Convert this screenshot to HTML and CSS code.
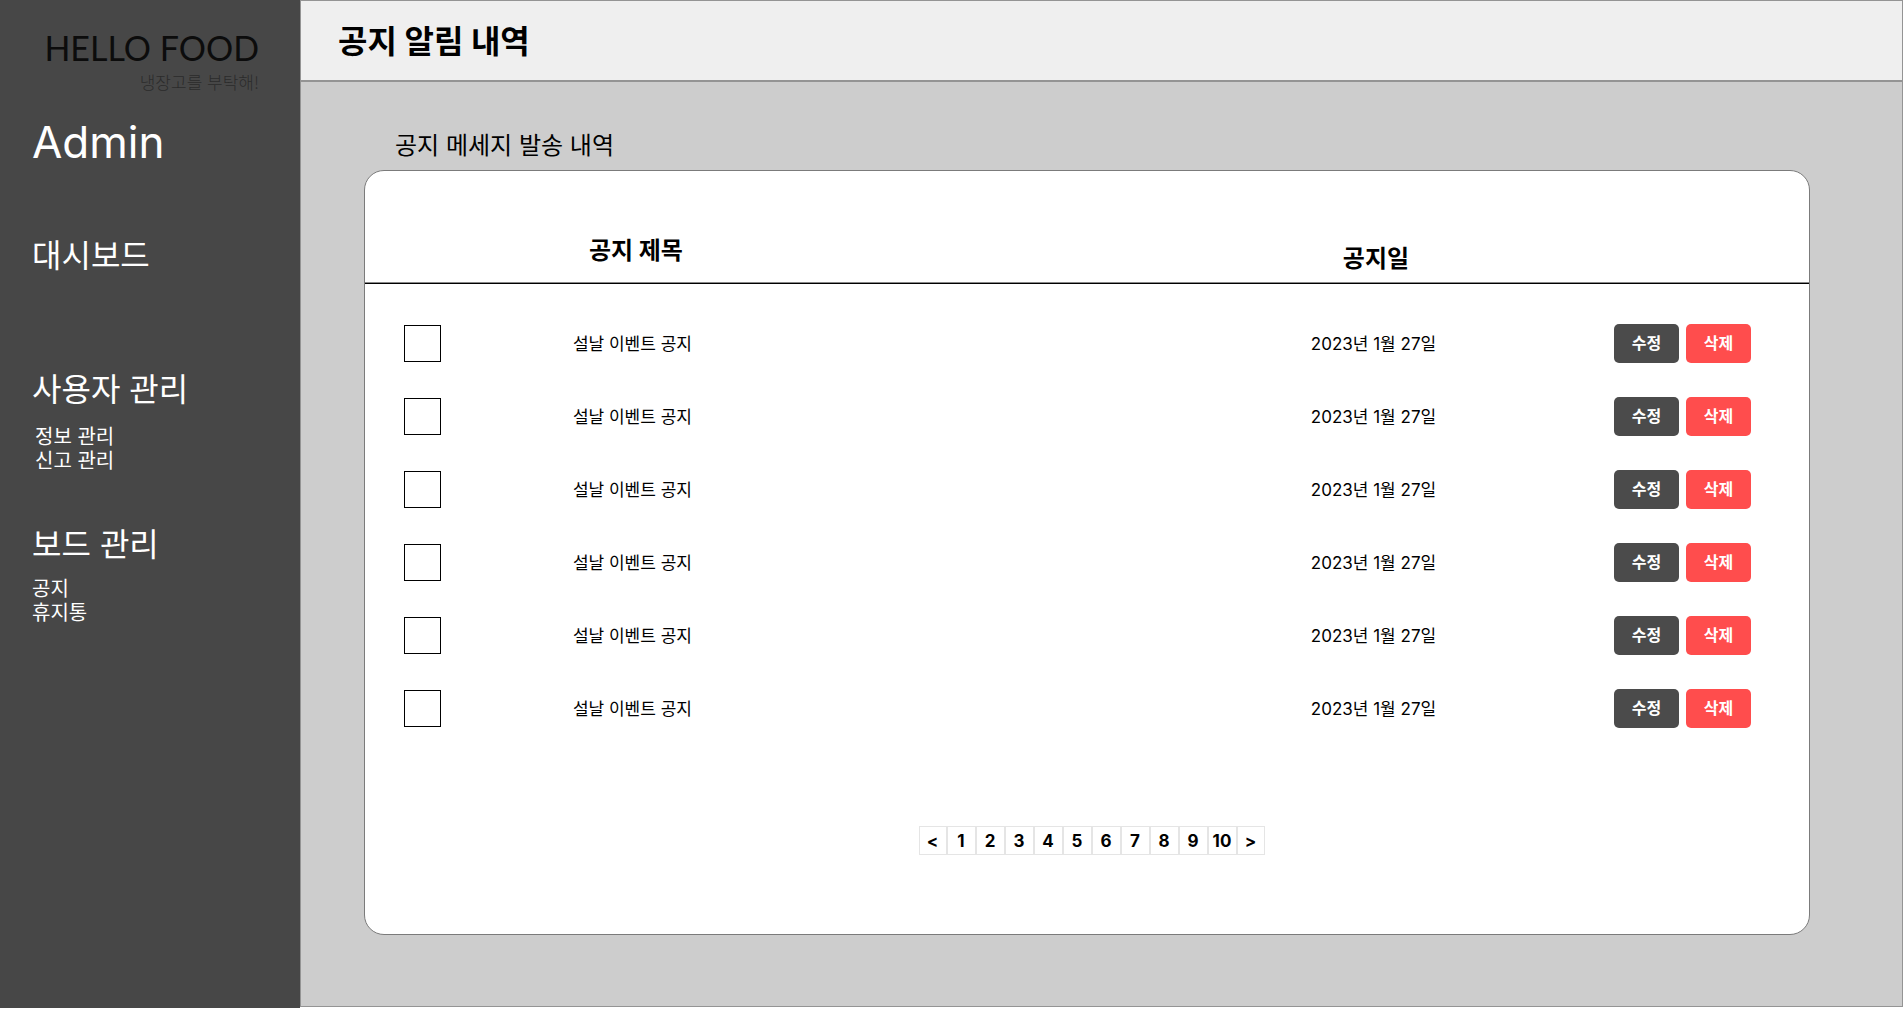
FILE: index.html
```html
<!DOCTYPE html>
<html lang="ko">
<head>
<meta charset="utf-8">
<meta name="viewport" content="width=device-width, initial-scale=1">
<title>공지 알림 내역</title>
<link rel="stylesheet" href="styles.css">
</head>
<body>
<div class="layout">
  <aside class="sidebar">
    <a class="logo" href="#">
      <span class="logo-name">HELLO FOOD</span>
      <span class="logo-tagline">냉장고를 부탁해!</span>
    </a>
    <p class="role">Admin</p>
    <nav class="menu">
      <section class="menu-group menu-group-first">
        <a class="menu-title" href="#">대시보드</a>
      </section>
      <section class="menu-group">
        <a class="menu-title" href="#">사용자 관리</a>
        <ul class="submenu submenu-indent">
          <li><a href="#">정보 관리</a></li>
          <li><a href="#">신고 관리</a></li>
        </ul>
      </section>
      <section class="menu-group">
        <a class="menu-title" href="#">보드 관리</a>
        <ul class="submenu">
          <li><a href="#">공지</a></li>
          <li><a href="#">휴지통</a></li>
        </ul>
      </section>
    </nav>
  </aside>
  <main class="main">
    <header class="topbar"><h1>공지 알림 내역</h1></header>
    <div class="content">
      <h2 class="section-title">공지 메세지 발송 내역</h2>
      <section class="card">
        <table class="notices">
          <colgroup><col class="col-check"><col class="col-title"><col class="col-date"><col></colgroup>
          <thead>
            <tr><th></th><th class="head-title">공지 제목</th><th class="head-date">공지일</th><th></th></tr>
          </thead>
          <tbody>
            <tr><td class="check"><input type="checkbox" aria-label="공지 1 선택"></td><td>설날 이벤트 공지</td><td>2023년 1월 27일</td><td><div class="actions"><button type="button" class="btn">수정</button><button type="button" class="btn btn-delete">삭제</button></div></td></tr>
            <tr><td class="check"><input type="checkbox" aria-label="공지 2 선택"></td><td>설날 이벤트 공지</td><td>2023년 1월 27일</td><td><div class="actions"><button type="button" class="btn">수정</button><button type="button" class="btn btn-delete">삭제</button></div></td></tr>
            <tr><td class="check"><input type="checkbox" aria-label="공지 3 선택"></td><td>설날 이벤트 공지</td><td>2023년 1월 27일</td><td><div class="actions"><button type="button" class="btn">수정</button><button type="button" class="btn btn-delete">삭제</button></div></td></tr>
            <tr><td class="check"><input type="checkbox" aria-label="공지 4 선택"></td><td>설날 이벤트 공지</td><td>2023년 1월 27일</td><td><div class="actions"><button type="button" class="btn">수정</button><button type="button" class="btn btn-delete">삭제</button></div></td></tr>
            <tr><td class="check"><input type="checkbox" aria-label="공지 5 선택"></td><td>설날 이벤트 공지</td><td>2023년 1월 27일</td><td><div class="actions"><button type="button" class="btn">수정</button><button type="button" class="btn btn-delete">삭제</button></div></td></tr>
            <tr><td class="check"><input type="checkbox" aria-label="공지 6 선택"></td><td>설날 이벤트 공지</td><td>2023년 1월 27일</td><td><div class="actions"><button type="button" class="btn">수정</button><button type="button" class="btn btn-delete">삭제</button></div></td></tr>
          </tbody>
        </table>
        <nav class="pagination" aria-label="페이지">
          <a class="edge" href="#">&lt;</a><a href="#">1</a><a href="#">2</a><a href="#">3</a><a href="#">4</a><a href="#">5</a><a href="#">6</a><a href="#">7</a><a href="#">8</a><a href="#">9</a><a href="#">10</a><a class="edge" href="#">&gt;</a>
        </nav>
      </section>
    </div>
  </main>
</div>
</body>
</html>
```

FILE: styles.css
```css
* {
  box-sizing: border-box;
}

body {
  margin: 0;
  background: #fff;
  color: #000;
  font-family: Inter, "Noto Sans CJK KR", sans-serif;
  font-size: 17px;
  line-height: 24px;
}

a {
  color: inherit;
  text-decoration: none;
}

h1, h2, p, ul {
  margin: 0;
  padding: 0;
}

.layout {
  display: flex;
  min-height: calc(100vh - 16px);
}

/* Sidebar */
.sidebar {
  flex: 0 0 300px;
  padding: 28px 32px 0;
  background: #474747;
  color: #fff;
}

.logo {
  display: flex;
  flex-direction: column;
  align-items: flex-end;
  gap: 4px;
  padding-right: 9px;
  white-space: nowrap;
}

.logo-name {
  color: #0c0c0c;
  font-family: Lato, sans-serif;
  font-size: 34px;
  line-height: 40px;
}

.logo-tagline {
  color: #2b2b2b;
  font-family: "Noto Sans CJK KR", sans-serif;
  font-size: 17px;
  font-weight: 300;
  line-height: 20px;
}

.role {
  margin-top: 20px;
  font-size: 44px;
  line-height: 60px;
}

.menu {
  margin-top: 64px;
}

.menu-group {
  margin-top: 52px;
}

.menu-group-first {
  margin: 0 0 94px;
}

.menu-title {
  display: block;
  font-size: 32px;
  line-height: 40px;
}

.submenu {
  margin-top: 12px;
  list-style: none;
  font-size: 20px;
}

.submenu-indent {
  margin-top: 15px;
  padding-left: 3px;
}

/* Main area */
.main {
  flex: 1;
  min-width: 0;
  margin-bottom: 1px;
  border: 1px solid #949494;
  background: #cdcdcd;
}

.topbar {
  padding: 21px 37px 18px;
  border-bottom: 2px solid #949494;
  background: #efefef;
}

.topbar h1 {
  font-size: 32px;
  line-height: 40px;
}

.content {
  padding: 48px 92px 71px 63px;
}

.section-title {
  padding-left: 31px;
  font-size: 24px;
  font-weight: 400;
  line-height: 32px;
}

.card {
  margin-top: 8px;
  padding-bottom: 79px;
  border: 1px solid #7b7b7b;
  border-radius: 20px;
  background: #fff;
}

.notices {
  width: 100%;
  border-spacing: 0;
  table-layout: fixed;
}

.col-check {
  width: 14.4%;
}

.col-title {
  width: 51.1%;
}

.col-date {
  width: 21%;
}

.notices th {
  height: 113px;
  padding: 0 0 16px;
  border-bottom: 1px solid #000;
  box-shadow: inset 0 -1px #888;
  font-size: 24px;
  line-height: 32px;
  text-align: left;
  vertical-align: bottom;
}

.notices .head-title {
  padding: 0 0 16px 16px;
}

.notices .head-date {
  padding: 0 0 8px 32px;
}

.notices tbody::before {
  display: block;
  height: 23px;
  content: "";
}

.notices td {
  height: 73px;
  padding: 0;
}

.notices .check {
  padding-left: 39px;
}

.check input {
  display: block;
  width: 37px;
  height: 37px;
  margin: 0;
  appearance: none;
  border: 1px solid #000;
  border-radius: 0;
  background: #fff;
}

.check input:checked {
  background: #474747;
}

.actions {
  display: flex;
  justify-content: flex-end;
  gap: 7px;
  padding-right: 58px;
}

.btn {
  width: 65px;
  height: 39px;
  padding: 0 0 2px;
  border: 0;
  border-radius: 5px;
  background: #4b4b4b;
  color: #fff;
  font: inherit;
  font-size: 16px;
  font-weight: 700;
}

.btn-delete {
  background: #ff4d4d;
}

.pagination {
  display: flex;
  justify-content: center;
  margin: 81px 0 0 9px;
}

.pagination a {
  width: 29px;
  padding-top: 2px;
  border: 1px solid #e5e5e5;
  font-weight: 700;
  line-height: 25px;
  text-align: center;
}

.pagination .edge {
  width: 28px;
}
```
